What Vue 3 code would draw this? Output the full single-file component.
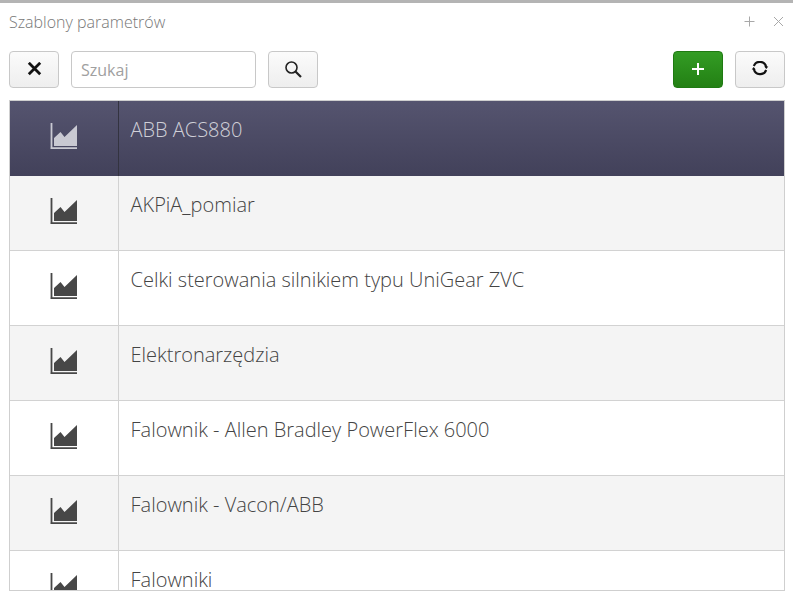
<script setup>
const rows = [
  'ABB ACS880',
  'AKPiA_pomiar',
  'Celki sterowania silnikiem typu UniGear ZVC',
  'Elektronarzędzia',
  'Falownik - Allen Bradley PowerFlex 6000',
  'Falownik - Vacon/ABB',
  'Falowniki'
]
</script>

<template>
  <div class="window">
    <div class="topline"></div>
    <header class="titlebar">
      <span class="title">Szablony parametrów</span>
      <div class="winbtns">
        <svg width="11" height="11" viewBox="0 0 11 11"><path d="M5.500 0.500v10M0.500 5.500h10" stroke="#a8a8a8" fill="none"/></svg>
        <svg width="9" height="9" viewBox="0 0 9 9"><path d="M0 0l9 9M9 0l-9 9" stroke="#a8a8a8" fill="none"/></svg>
      </div>
    </header>
    <div class="toolbar">
      <button class="btn">
        <svg width="16" height="16" viewBox="0 0 16 16"><path d="M2.800 0.800l11.400 11.400M14.200 0.800l-11.400 11.400" stroke="#111" stroke-width="2.800" fill="none"/></svg>
      </button>
      <input class="search" placeholder="Szukaj" />
      <button class="btn">
        <svg width="18" height="18" viewBox="0 0 18 18"><circle cx="7.500" cy="6.500" r="5.500" stroke="#222" stroke-width="1.600" fill="none"/><path d="M11.500 10.500l5.500 5.500" stroke="#222" stroke-width="2.200" fill="none"/></svg>
      </button>
      <div class="spacer"></div>
      <button class="btn green">
        <svg width="14" height="14" viewBox="0 0 14 14"><path d="M7 0v12M1 6h12" stroke="#fff" stroke-width="2" fill="none"/></svg>
      </button>
      <button class="btn">
        <svg width="18" height="18" viewBox="0 0 18 18"><path d="M2.800 5a6.500 6.500 0 0 1 12.400 1M15.200 9a6.500 6.500 0 0 1-12.400-1" stroke="#111" stroke-width="2.100" fill="none"/><path d="M13.300 5.500h4l-2 2.500zM0.700 8.500h4l-2-2.500z" fill="#111"/></svg>
      </button>
    </div>
    <div class="list">
      <div v-for="(name, i) in rows" :key="name" class="row" :class="{ selected: i === 0, odd: i % 2 === 1 }">
        <div class="cell-icon">
          <svg width="28" height="27" viewBox="0 0 28 27">
            <path d="M1.500 0v26M0.500 25.200h26.500" stroke="currentColor" stroke-width="1.800" fill="none"/>
            <path d="M4 23v-8l6.500-6 4 5 12.500-12v21z" fill="currentColor"/>
          </svg>
        </div>
        <div class="cell-name">{{ name }}</div>
      </div>
    </div>
  </div>
</template>

<style scoped>
.window { width: 793px; height: 601px; background: #fff; overflow: hidden; font-family: "Open Sans", sans-serif; display: flex; flex-direction: column; }
.topline { height: 3px; background: #b4b4b4; flex: none; }
.titlebar { height: 39px; flex: none; display: flex; align-items: center; justify-content: space-between; padding: 0 10px 2px 9px; box-sizing: border-box; }
.title { font-size: 16px; font-weight: 300; color: #777; }
.winbtns { display: flex; align-items: center; gap: 19px; margin-top: -1px; }
.toolbar { display: flex; gap: 12px; margin: 9px 8px 0 9px; height: 37px; flex: none; }
.spacer { flex: 1; }
.btn { width: 50px; height: 37px; box-sizing: border-box; border: 1px solid #c8c8c8; border-radius: 4px; background: linear-gradient(#fbfbfb, #eeeeee); padding: 0; display: flex; align-items: center; justify-content: center; }
.btn.green { background: linear-gradient(#339c24, #238014); border-color: #1f7a12; }
.search { width: 185px; height: 37px; box-sizing: border-box; border: 1px solid #c8c8c8; border-radius: 4px; padding: 0 9px; font: 400 16px "Open Sans", sans-serif; color: #555; outline: none; }
.search::placeholder { color: #a0a0a0; opacity: 1; }
.list { margin: 12px 8px 10px 9px; border: 1px solid #cfcfcf; flex: 1; min-height: 0; overflow: hidden; }
.row { height: 75px; box-sizing: border-box; display: flex; border-bottom: 1px solid #d2d2d2; background: #fff; color: #474747; }
.row.odd { background: #f4f4f4; }
.row.selected { background: linear-gradient(#55546f, #42415a); color: #c9c9d2; border-bottom: 0; }
.cell-icon { width: 109px; flex: none; box-sizing: border-box; border-right: 1px solid #d2d2d2; display: flex; justify-content: center; padding: 22px 1px 0 0; }
.selected .cell-icon { border-right-color: #333340; }
.cell-name { font-size: 20px; font-weight: 300; padding: 13px 0 0 11.500px; line-height: 32px; color: #444; }
.selected .cell-name { color: #d0d0d8; }
</style>
